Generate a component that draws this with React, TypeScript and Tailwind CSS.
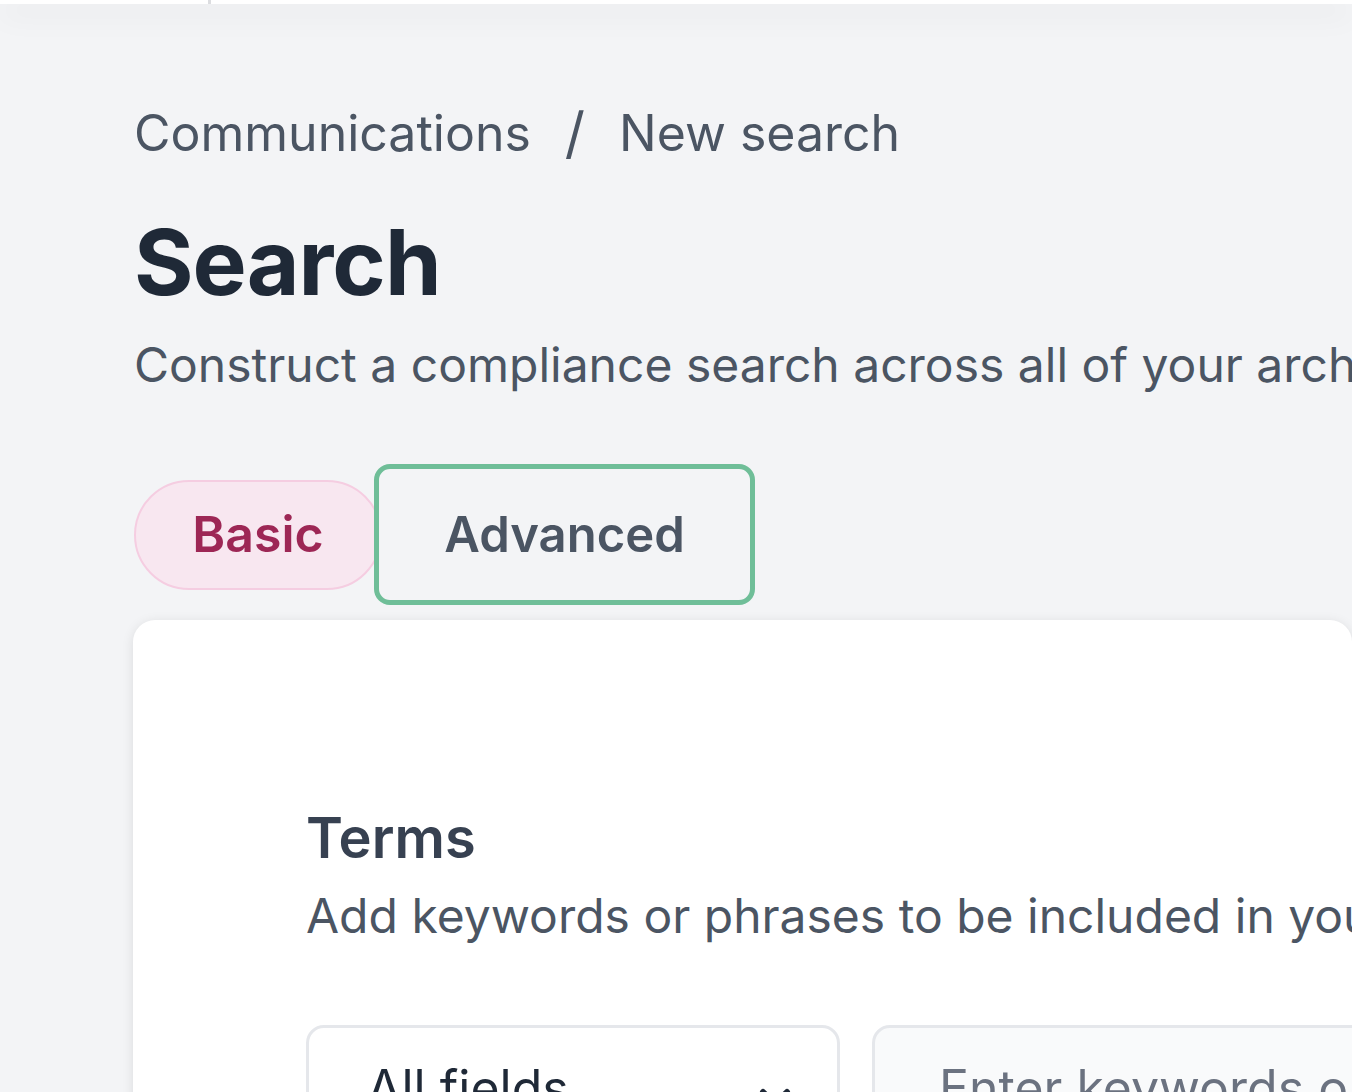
import React from "react";

export default function App() {
  return (
    <div
      className="relative w-[1352px] h-[1092px] overflow-hidden bg-[#f3f4f6]"
      style={{ fontFamily: "Inter, 'Noto Sans', sans-serif" }}
    >
      {/* top bar remnant */}
      <div className="relative z-10 h-[4px] bg-white shadow-[0_8px_30px_rgba(0,0,0,0.16)]">
        <div className="absolute left-[208px] top-0 h-[4px] w-[3px] bg-[#dcdde0]" />
      </div>

      <div className="pl-[134px] pt-[93px]">
        {/* breadcrumb */}
        <div className="flex items-center text-[50px] leading-[72px] text-[#4b5563] whitespace-nowrap">
          <span>Communications</span>
          <span className="ml-[34px] mr-[34px] text-[56px] text-[#4b5563]">/</span>
          <span>New search</span>
        </div>

        <h1 className="mt-[37px] text-[91px] leading-[112px] font-bold text-[#1f2937] tracking-[-1px]">
          Search
        </h1>

        <p className="mt-[11px] text-[48px] leading-[72px] text-[#4b5563] whitespace-nowrap">
          Construct a compliance search across all of your archived communications
        </p>

        {/* tabs */}
        <div className="mt-[63px] flex items-center">
          <button className="h-[110px] w-[248px] rounded-full border-2 border-[#f5cde1] bg-[#f8e7f0] text-[50px] font-semibold text-[#9d2755]">
            Basic
          </button>
          <button className="-ml-[8px] h-[141px] w-[381px] rounded-[16px] border-[5px] border-[#6fbe98] bg-[#f3f4f6] text-[49px] font-semibold text-[#4b5563]">
            Advanced
          </button>
        </div>

        {/* card */}
        <div className="mt-[15px] -ml-[1px] h-[600px] rounded-[22px] bg-white shadow-[0_2px_12px_rgba(0,0,0,0.10)] pl-[173px] pt-[180px]">
          <h2 className="text-[56px] leading-[76px] font-semibold text-[#374151]">Terms</h2>
          <p className="mt-[4px] text-[48px] leading-[72px] text-[#4b5563] whitespace-nowrap">
            Add keywords or phrases to be included in your search results
          </p>

          <div className="mt-[73px] flex gap-[32px]">
            <div className="relative h-[140px] w-[534px] shrink-0 rounded-[18px] border-[3px] border-[#e5e7eb] bg-white">
              <span className="absolute left-[58px] top-[24px] text-[50px] leading-[72px] text-[#1f2937]">
                All fields
              </span>
              <svg
                className="absolute left-[442px] top-[46px]"
                width="48"
                height="48"
                viewBox="0 0 24 24"
                fill="none"
                stroke="#1f2937"
                strokeWidth="3"
                strokeLinecap="round"
                strokeLinejoin="round"
              >
                <path d="M6 9l6 6 6-6" />
              </svg>
            </div>
            <div className="relative h-[140px] w-[700px] shrink-0 rounded-[18px] border-[3px] border-[#e5e7eb] bg-[#f9fafb]">
              <span className="absolute left-[64px] top-[24px] text-[50px] leading-[72px] text-[#6b7280] whitespace-nowrap">
                Enter keywords or phrases
              </span>
            </div>
          </div>
        </div>
      </div>
    </div>
  );
}
